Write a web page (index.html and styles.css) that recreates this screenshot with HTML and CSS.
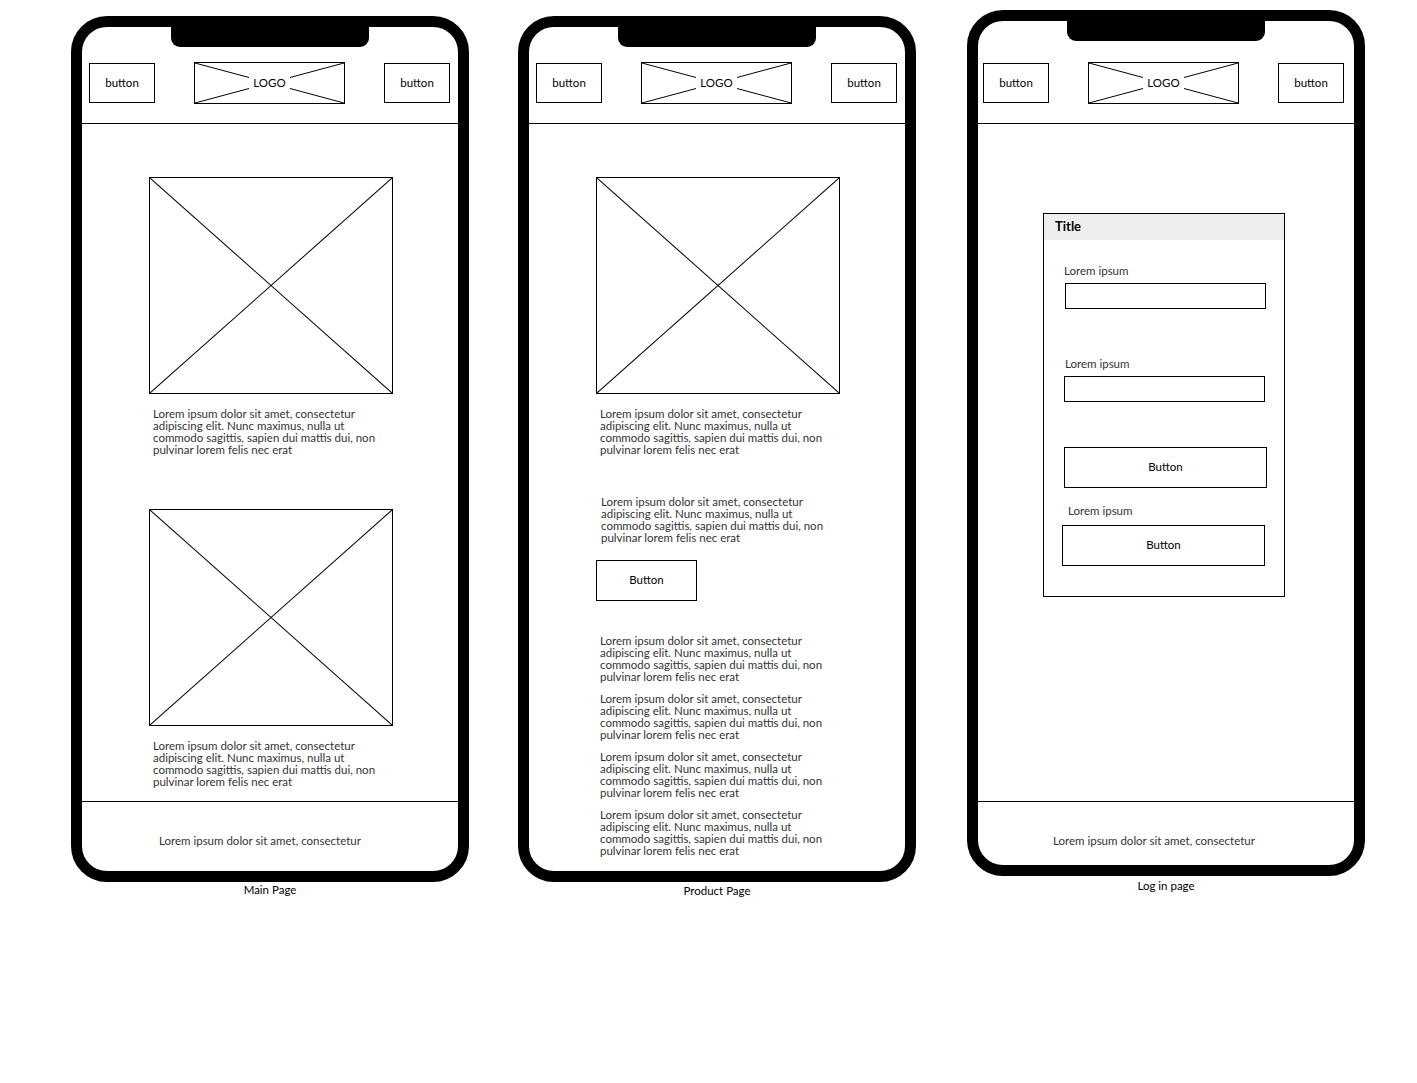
FILE: index.html
```html
<!DOCTYPE html>
<html lang="en">
<head>
    <meta charset="UTF-8">
    <title>Wireframes</title>
    <link rel="stylesheet" href="styles.css">
</head>
<body>

<div class="board">

    <!-- Main page -->
    <div class="device">
        <div class="phone">
            <div class="notch"></div>
            <div class="header">
                <div class="btn">button</div>
                <div class="logo">
                    <svg class="cross" viewBox="0 0 100 100" preserveAspectRatio="none"><line x1="0" y1="0" x2="100" y2="100"/><line x1="100" y1="0" x2="0" y2="100"/></svg>
                    <span>LOGO</span>
                </div>
                <div class="btn">button</div>
            </div>
            <div class="content main">
                <div class="pic">
                    <svg class="cross" viewBox="0 0 100 100" preserveAspectRatio="none"><line x1="0" y1="0" x2="100" y2="100"/><line x1="100" y1="0" x2="0" y2="100"/></svg>
                </div>
                <p class="text t1">Lorem ipsum dolor sit amet, consectetur<br>adipiscing elit. Nunc maximus, nulla ut<br>commodo sagittis, sapien dui mattis dui, non<br>pulvinar lorem felis nec erat</p>
                <div class="pic pic2">
                    <svg class="cross" viewBox="0 0 100 100" preserveAspectRatio="none"><line x1="0" y1="0" x2="100" y2="100"/><line x1="100" y1="0" x2="0" y2="100"/></svg>
                </div>
                <p class="text t1">Lorem ipsum dolor sit amet, consectetur<br>adipiscing elit. Nunc maximus, nulla ut<br>commodo sagittis, sapien dui mattis dui, non<br>pulvinar lorem felis nec erat</p>
            </div>
            <div class="footer">Lorem ipsum dolor sit amet, consectetur</div>
        </div>
        <div class="caption">Main Page</div>
    </div>

    <!-- Product page -->
    <div class="device">
        <div class="phone">
            <div class="notch"></div>
            <div class="header">
                <div class="btn">button</div>
                <div class="logo">
                    <svg class="cross" viewBox="0 0 100 100" preserveAspectRatio="none"><line x1="0" y1="0" x2="100" y2="100"/><line x1="100" y1="0" x2="0" y2="100"/></svg>
                    <span>LOGO</span>
                </div>
                <div class="btn">button</div>
            </div>
            <div class="content product">
                <div class="pic">
                    <svg class="cross" viewBox="0 0 100 100" preserveAspectRatio="none"><line x1="0" y1="0" x2="100" y2="100"/><line x1="100" y1="0" x2="0" y2="100"/></svg>
                </div>
                <p class="text t1">Lorem ipsum dolor sit amet, consectetur<br>adipiscing elit. Nunc maximus, nulla ut<br>commodo sagittis, sapien dui mattis dui, non<br>pulvinar lorem felis nec erat</p>
                <p class="text t2">Lorem ipsum dolor sit amet, consectetur<br>adipiscing elit. Nunc maximus, nulla ut<br>commodo sagittis, sapien dui mattis dui, non<br>pulvinar lorem felis nec erat</p>
                <div class="big-btn buy">Button</div>
                <p class="text t3">Lorem ipsum dolor sit amet, consectetur<br>adipiscing elit. Nunc maximus, nulla ut<br>commodo sagittis, sapien dui mattis dui, non<br>pulvinar lorem felis nec erat</p>
                <p class="text t4">Lorem ipsum dolor sit amet, consectetur<br>adipiscing elit. Nunc maximus, nulla ut<br>commodo sagittis, sapien dui mattis dui, non<br>pulvinar lorem felis nec erat</p>
                <p class="text t4">Lorem ipsum dolor sit amet, consectetur<br>adipiscing elit. Nunc maximus, nulla ut<br>commodo sagittis, sapien dui mattis dui, non<br>pulvinar lorem felis nec erat</p>
                <p class="text t4">Lorem ipsum dolor sit amet, consectetur<br>adipiscing elit. Nunc maximus, nulla ut<br>commodo sagittis, sapien dui mattis dui, non<br>pulvinar lorem felis nec erat</p>
            </div>
        </div>
        <div class="caption cap2">Product Page</div>
    </div>

    <!-- Log in page -->
    <div class="device login-device">
        <div class="phone">
            <div class="notch"></div>
            <div class="header header3">
                <div class="btn">button</div>
                <div class="logo">
                    <svg class="cross" viewBox="0 0 100 100" preserveAspectRatio="none"><line x1="0" y1="0" x2="100" y2="100"/><line x1="100" y1="0" x2="0" y2="100"/></svg>
                    <span>LOGO</span>
                </div>
                <div class="btn">button</div>
            </div>
            <div class="content login">
                <div class="panel">
                    <div class="panel-title">Title</div>
                    <div class="field-label l1">Lorem ipsum</div>
                    <div class="field f1"></div>
                    <div class="field-label l2">Lorem ipsum</div>
                    <div class="field f2"></div>
                    <div class="big-btn wide b1">Button</div>
                    <div class="field-label l3">Lorem ipsum</div>
                    <div class="big-btn wide b2">Button</div>
                </div>
            </div>
            <div class="footer footer3">Lorem ipsum dolor sit amet, consectetur</div>
        </div>
        <div class="caption cap3">Log in page</div>
    </div>

</div>

</body>
</html>
```

FILE: styles.css
```css
body {
    margin: 0;
    background: #fff;
    font-family: Lato, "Liberation Sans", sans-serif;
    font-size: 11.5px;
    color: #000;
}
.board {
    display: flex;
    align-items: flex-start;
    gap: 49px;
    padding: 16px 0 0 71px;
}
.device {
    display: flex;
    flex-direction: column;
    align-items: center;
}
.login-device {
    margin-top: -6px;
    margin-left: 2px;
}
.phone {
    width: 398px;
    height: 866px;
    box-sizing: border-box;
    border: 11px solid #000;
    border-radius: 36px;
    display: flex;
    flex-direction: column;
    overflow: hidden;
    background: #fff;
}
.notch {
    width: 198px;
    height: 20px;
    margin: 0 auto;
    flex: none;
    background: #000;
    border-radius: 0 0 9px 9px;
}
.header {
    display: flex;
    justify-content: space-between;
    align-items: center;
    padding: 15px 8px 19px 7px;
    border-bottom: 1px solid #000;
    flex: none;
}
.header3 {
    padding: 21px 10px 19px 5px;
}
.btn {
    width: 66px;
    height: 40px;
    box-sizing: border-box;
    border: 1px solid #000;
    display: flex;
    align-items: center;
    justify-content: center;
    line-height: 14px;
}
.logo {
    position: relative;
    width: 151px;
    height: 42px;
    box-sizing: border-box;
    border: 1px solid #000;
    display: flex;
    align-items: center;
    justify-content: center;
}
.logo span {
    position: relative;
    background: #fff;
    padding: 0 4px;
    line-height: 14px;
}
.cross {
    position: absolute;
    top: 0;
    left: 0;
    width: 100%;
    height: 100%;
}
.cross line {
    stroke: #000;
    stroke-width: 1;
    vector-effect: non-scaling-stroke;
}
.content {
    flex: 1;
    display: flex;
    flex-direction: column;
    align-items: flex-start;
}
.pic {
    position: relative;
    width: 244px;
    height: 217px;
    box-sizing: border-box;
    border: 1px solid #000;
    margin: 53px 0 0 67px;
}
.main .pic2 {
    margin-top: 53px;
}
.text {
    margin: 0;
    color: #333;
    line-height: 12px;
    white-space: nowrap;
}
.t1 {
    margin: 14px 0 0 71px;
}
.t2 {
    margin: 40px 0 0 72px;
}
.t3 {
    margin: 34px 0 0 71px;
}
.t4 {
    margin: 10px 0 0 71px;
}
.big-btn {
    width: 101px;
    height: 41px;
    box-sizing: border-box;
    border: 1px solid #000;
    display: flex;
    align-items: center;
    justify-content: center;
    line-height: 14px;
    padding-bottom: 2px;
}
.buy {
    margin: 16px 0 0 67px;
}
.footer {
    flex: none;
    height: 70px;
    box-sizing: border-box;
    border-top: 1px solid #000;
    padding: 33px 0 0 77px;
    color: #333;
    line-height: 12px;
}
.footer3 {
    height: 64px;
    padding-left: 75px;
}
.caption {
    margin-top: 1px;
    line-height: 14px;
    color: #000;
}
.cap2 {
    margin-top: 2px;
}
.cap3 {
    margin-top: 3px;
}

/* log in panel */
.panel {
    width: 242px;
    height: 384px;
    box-sizing: border-box;
    margin: 89px 0 0 65px;
    border: 1px solid #000;
    display: flex;
    flex-direction: column;
    align-items: flex-start;
}
.panel-title {
    align-self: stretch;
    height: 26px;
    background: #eeeeee;
    padding-left: 11px;
    font-size: 13px;
    font-weight: bold;
    line-height: 25px;
}
.field-label {
    color: #333;
    line-height: 12px;
}
.l1 {
    margin: 25px 0 0 20px;
}
.l2 {
    margin: 49px 0 0 21px;
}
.l3 {
    margin: 17px 0 0 24px;
}
.field {
    width: 201px;
    height: 26px;
    box-sizing: border-box;
    border: 1px solid #000;
}
.f1 {
    margin: 6px 0 0 21px;
}
.f2 {
    margin: 6px 0 0 20px;
}
.wide {
    width: 203px;
}
.b1 {
    margin: 45px 0 0 20px;
}
.b2 {
    margin: 8px 0 0 18px;
}
```
